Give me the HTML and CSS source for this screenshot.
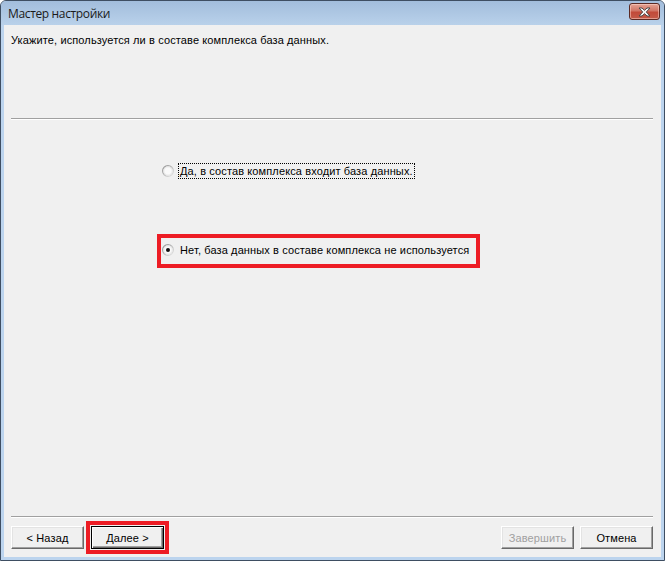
FILE: index.html
```html
<!DOCTYPE html>
<html lang="ru">
<head>
<meta charset="utf-8">
<title>Мастер настройки</title>
<link rel="stylesheet" href="styles.css">
</head>
<body>
<div class="window">
  <div class="titlebar">
    <span class="title">Мастер настройки</span>
    <span class="close">
      <svg width="15" height="10" viewBox="0 0 15 10">
        <path d="M2 1 L5 1 L7.5 3.3 L10 1 L13 1 L9.3 5 L13 9 L10 9 L7.5 6.7 L5 9 L2 9 L5.7 5 Z" fill="#f4f4f4" stroke="#4a4a4a" stroke-width="1" stroke-linejoin="round"/>
      </svg>
    </span>
  </div>
  <div class="client">
    <div class="header">Укажите, используется ли в составе комплекса база данных.</div>
    <div class="sep"></div>
    <div class="options">
      <div class="row row-first">
        <span class="radio">
          <svg width="12" height="12" viewBox="0 0 12 12">
            <defs>
              <linearGradient id="rg1" x1="0" y1="0" x2="1" y2="1">
                <stop offset="0" stop-color="#8c8c8c"/>
                <stop offset="1" stop-color="#e8e8e8"/>
              </linearGradient>
            </defs>
            <circle cx="6" cy="6" r="5.4" fill="#fafafa" stroke="url(#rg1)" stroke-width="1.2"/>
            <circle cx="6" cy="6" r="4.2" fill="none" stroke="#e0e0e0" stroke-width="0.8"/>
          </svg>
        </span>
        <span class="label focus">Да, в состав комплекса входит база данных.</span>
      </div>
      <div class="hl">
        <div class="row">
          <span class="radio">
            <svg width="12" height="12" viewBox="0 0 12 12">
              <defs>
                <linearGradient id="rg2" x1="0" y1="0" x2="1" y2="1">
                  <stop offset="0" stop-color="#8c8c8c"/>
                  <stop offset="1" stop-color="#e8e8e8"/>
                </linearGradient>
              </defs>
              <circle cx="6" cy="6" r="5.4" fill="#fafafa" stroke="url(#rg2)" stroke-width="1.2"/>
              <circle cx="6" cy="6" r="4.2" fill="none" stroke="#e0e0e0" stroke-width="0.8"/>
              <circle cx="6" cy="6" r="2" fill="#111"/>
            </svg>
          </span>
          <span class="label">Нет, база данных в составе комплекса не используется</span>
        </div>
      </div>
    </div>
    <div class="sep sep-bottom"></div>
    <div class="buttons">
      <button class="btn">&lt; Назад</button>
      <span class="hl-btn"><button class="btn btn-default">Далее &gt;</button></span>
      <span class="spacer"></span>
      <button class="btn btn-disabled">Завершить</button>
      <button class="btn">Отмена</button>
    </div>
  </div>
</div>
</body>
</html>
```

FILE: styles.css
```css
html, body {
  margin: 0;
  padding: 0;
  background: #ffffff;
}

body {
  width: 665px;
  height: 561px;
  overflow: hidden;
  font-family: "Liberation Sans", Arial, sans-serif;
  font-size: 11px;
  letter-spacing: 0.12px;
  color: #000;
}

.window {
  width: 665px;
  height: 561px;
  box-sizing: border-box;
  border: 1px solid #3e4e62;
  border-radius: 6px 6px 0 0;
  background: #bcd4ee;
  padding: 0 3px 3px 3px;
  display: flex;
  flex-direction: column;
}

.titlebar {
  height: 24px;
  flex: none;
  display: flex;
  align-items: center;
  margin: 0 -3px;
  padding-left: 7px;
  padding-right: 4px;
  background: linear-gradient(#a2bddc, #b9d1ea);
  border-radius: 5px 5px 0 0;
}

.title {
  font-family: "Open Sans", "Liberation Sans", sans-serif;
  font-size: 12px;
  color: #1a1a1a;
  flex: 1;
  letter-spacing: -0.35px;
  padding-top: 1px;
}

.close {
  width: 29px;
  height: 15px;
  margin-top: -3px;
  border: 1px solid #5b2a24;
  border-radius: 3px;
  background: linear-gradient(#e4a394 0%, #d07565 45%, #c14a39 55%, #c45a48 100%);
  box-shadow: inset 0 0 0 1px rgba(255, 220, 210, 0.5);
  display: flex;
  align-items: center;
  justify-content: center;
}

.close svg {
  display: block;
}

.client {
  flex: 1;
  background: #f0f0f0;
  display: flex;
  flex-direction: column;
}

.header {
  height: 93px;
  box-sizing: border-box;
  padding: 9px 7px 0 7px;
  line-height: 13px;
}

.sep {
  flex: none;
  height: 0;
  margin: 0 8px 0 7px;
  border-top: 1px solid #a0a0a0;
  border-bottom: 1px solid #ffffff;
}

.options {
  flex: 1;
  padding-left: 153px;
  padding-top: 43px;
}

.row {
  display: flex;
  align-items: center;
  height: 16px;
}

.row-first {
  margin-left: 5px;
}

.radio {
  width: 12px;
  height: 12px;
  flex: none;
}

.radio svg {
  display: block;
}

.label {
  margin-left: 5px;
  line-height: 14px;
  padding: 0 1px;
  white-space: nowrap;
}

.focus {
  outline: 1px dotted #000;
}

.hl {
  margin-top: 55px;
  width: 314px;
  border: 4px solid #ed1c24;
  padding: 4px 0 6px 1px;
}

.buttons {
  flex: none;
  display: flex;
  align-items: center;
  margin: 8px 8px 8px 7px;
  height: 23px;
}

.btn {
  width: 73px;
  height: 23px;
  box-sizing: border-box;
  font-family: "Liberation Sans", Arial, sans-serif;
  font-size: 11px;
  letter-spacing: 0.12px;
  color: #000;
  background: #f0f0f0;
  border: 1px solid;
  border-color: #ffffff #696969 #696969 #ffffff;
  box-shadow: inset -1px -1px 0 #a0a0a0, inset 1px 1px 0 #e3e3e3;
  padding: 0;
  margin: 0;
}

.btn-default {
  border-color: #000;
  box-shadow: inset 1px 1px 0 #ffffff, inset -1px -1px 0 #696969, inset -2px -2px 0 #a0a0a0;
}

.hl-btn {
  display: block;
  margin: -5px 0 -5px 2px;
  border: 4px solid #ed1c24;
  padding: 1px;
}

.hl-btn .btn {
  display: block;
}

.spacer {
  flex: 1;
}

.btn-disabled {
  color: #a0a0a0;
  margin-right: 6px;
}
```
